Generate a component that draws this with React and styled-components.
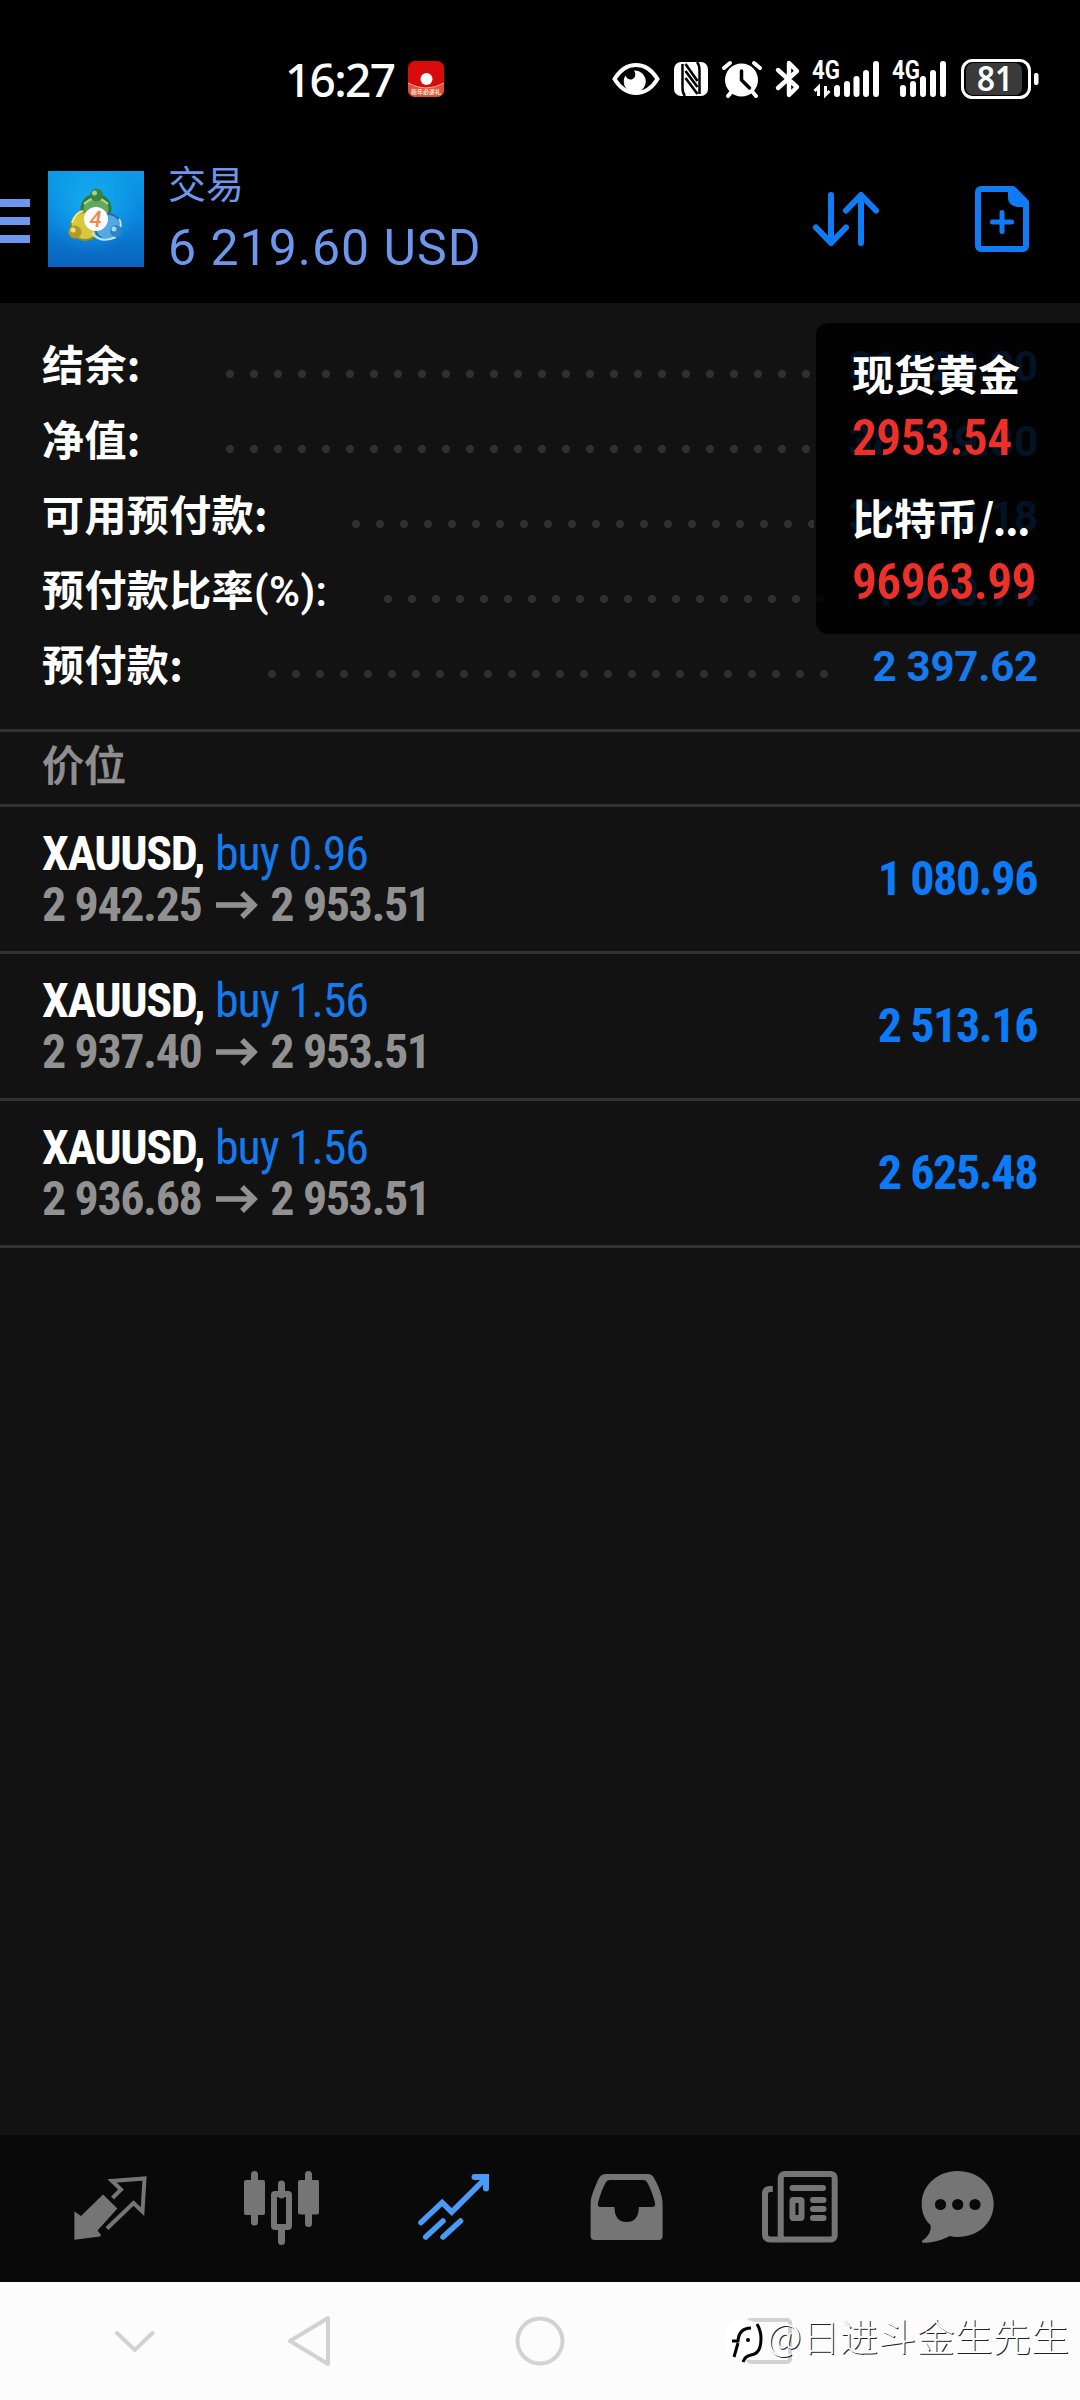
import React from 'react';
import styled, { createGlobalStyle } from 'styled-components';

const GlobalStyle = createGlobalStyle`
    * {
        box-sizing: border-box;
    }
    body {
        margin: 0;
        background: #121212;
        font-family: Roboto, "Noto Sans CJK SC", sans-serif;
    }
    svg {
        display: block;
        overflow: visible;
    }
`;

const Screen = styled.div`
    width: 1080px;
    height: 2400px;
    display: flex;
    flex-direction: column;
    background: #121212;
    overflow: hidden;
    white-space: nowrap;
`;

/* status bar */
const StatusBar = styled.div`
    height: 150px;
    padding: 8px 41px 0 285px;
    display: flex;
    align-items: center;
    background: #000;
    color: #fff;
`;

const Clock = styled.div`
    width: 123px;
    font-family: "Noto Sans", sans-serif;
    font-weight: 500;
    font-size: 46px;
    letter-spacing: -1.7px;
    line-height: 60px;
`;

const StatusIcons = styled.div`
    margin-left: auto;
    display: flex;
    align-items: center;
`;

/* header */
const Header = styled.div`
    height: 153px;
    padding: 21px 51px 0 0;
    display: flex;
    align-items: flex-start;
    background: #000;
    color: #6c97ec;
`;

const MenuButton = styled.div`
    width: 30px;
    height: 44px;
    margin: 28px 18px 0 0;
    display: flex;
    flex-direction: column;
    justify-content: space-between;
`;

const MenuLine = styled.div`
    height: 8px;
    background: #6c97ec;
`;

const HeaderText = styled.div`
    margin-left: 24px;
    flex: 1;
`;

const Title = styled.div`
    font-size: 38px;
    line-height: 40px;
    margin-top: -6px;
`;

const Total = styled.div`
    font-size: 50px;
    line-height: 60px;
    margin-top: 13px;
    letter-spacing: 1px;
`;

const HeaderIcons = styled.div`
    display: flex;
    align-items: center;
    gap: 96px;
    padding-top: 15px;
`;

/* account summary */
const Summary = styled.div`
    position: relative;
    height: 426px;
    padding: 26px 42px 0;
`;

const SummaryRow = styled.div`
    height: 75px;
    display: flex;
    align-items: center;
`;

const SummaryLabel = styled.div`
    height: 60px;
    margin-top: -7px;
    font-weight: 700;
    font-size: 42px;
    line-height: 60px;
    font-family: "Noto Sans CJK SC", sans-serif;
    letter-spacing: 0.4px;
    color: #fff;
`;

const Latin = styled.span`
    font-family: Roboto, sans-serif;
    font-weight: 600;
    line-height: 1;
`;

const Dots = styled.div`
    flex: 1;
    height: 24px;
    margin: 14px 35px 0 ${props => props.$gap}px;
    background: radial-gradient(circle at 4px 12px, #303030 3.6px, transparent 4.4px) 0 0 / 24px 24px repeat-x;
`;

const SummaryValue = styled.div`
    font-weight: 700;
    font-size: 42px;
    line-height: 60px;
    letter-spacing: -0.2px;
    color: #157aee;
`;

const QuotePanel = styled.div`
    position: absolute;
    top: 20px;
    right: 0;
    width: 264px;
    height: 311px;
    padding: 19px 0 0 36px;
    border-radius: 12px 0 0 12px;
    background: rgba(0, 0, 0, 0.85);
`;

const QuoteName = styled.div`
    font-family: "Noto Sans CJK SC", sans-serif;
    font-weight: 700;
    font-size: 42px;
    line-height: 62px;
    color: #fff;
`;

const Ellipsis = styled.span`
    letter-spacing: -1.5px;
`;

const QuotePrice = styled.div`
    height: 82px;
    padding-top: 3px;
    font-weight: 600;
    font-size: 50px;
    font-stretch: 75%;
    letter-spacing: -0.8px;
    line-height: 62px;
    color: #ee3029;
`;

/* positions */
const SectionTitle = styled.div`
    height: 78px;
    padding-left: 42px;
    border-top: 3px solid #333;
    border-bottom: 3px solid #333;
    font-family: "Noto Sans CJK SC", sans-serif;
    font-weight: 500;
    font-size: 42px;
    line-height: 61px;
    color: #8f8f8f;
    -webkit-text-stroke: 0.7px #8f8f8f;
`;

const Position = styled.div`
    height: 147px;
    padding: 0 42px;
    display: flex;
    justify-content: space-between;
    border-bottom: 3px solid #333;
    font-size: 48px;
    font-stretch: 75%;
    font-weight: 700;
    letter-spacing: -1.4px;
`;

const PositionInfo = styled.div`
    padding-top: 21px;
`;

const PositionLine = styled.div`
    display: flex;
    align-items: center;
    line-height: 51px;
    color: ${props => props.$muted ? '#919191' : '#fff'};
`;

const Side = styled.span`
    margin-left: 11px;
    font-weight: 400;
    letter-spacing: -1.1px;
    color: #157aee;
`;

const Profit = styled.div`
    line-height: 60px;
    padding-top: 42px;
    margin-right: 1px;
    color: #0c7bf5;
`;

const ArrowIcon = styled.svg`
    margin: 0 12px 0 15px;
`;

/* bottom bars */
const TabBar = styled.div`
    height: 147px;
    margin-top: auto;
    padding: 25px 0 0 60px;
    display: grid;
    grid-template-columns: 172px 172px 173px 173px 158px 100px;
    background: #090909;
    color: #757575;
`;

const Tab = styled.div`
    color: ${props => props.$active ? '#4a9bf7' : 'inherit'};
`;

const SystemBar = styled.div`
    position: relative;
    height: 118px;
    padding-left: 114px;
    display: grid;
    grid-template-columns: 172px 229px 230px 1fr;
    align-items: center;
    background: #fcfcfc;
    color: #d2d2d2;
`;

const Watermark = styled.div`
    position: absolute;
    left: 723px;
    top: 26px;
    display: flex;
    align-items: flex-start;
    font-family: "Noto Sans CJK SC", sans-serif;
    font-weight: 300;
    font-size: 38px;
    line-height: 53px;
    letter-spacing: 0.2px;
    color: #fff;
    text-shadow: 1px 1px 0 #222;
`;

const StatusIcon = styled.svg`
    margin-right: ${props => props.$gap || 0}px;
`;

const EyeIcon = () => (
    <StatusIcon $gap={14} width="48" height="36" viewBox="0 0 48 36">
        <path d="M2.500 18C8 9 15 4 24 4s16 5 21.500 14C40 27 33 32 24 32S8 27 2.500 18z" fill="none" stroke="#fff" strokeWidth="4" />
        <path d="M22 9.500a11 11 0 1 1-8.500 5c1 3 3.500 4.500 6 4 3.500-.7 5-5 2.500-9z" fill="#fff" />
    </StatusIcon>
);

const NfcIcon = () => (
    <StatusIcon $gap={14} width="34" height="34" viewBox="0 0 34 34">
        <rect width="34" height="34" rx="7" fill="#fff" />
        <path d="M8.500 2v24q0 5 2.500 8M25.500 32V8q0-5-2.500-8" fill="none" stroke="#000" strokeWidth="2.500" />
        <path d="M11.500 2l12 17M11.500 9l12 16M11.500 16l12 16" stroke="#000" strokeWidth="2.600" />
    </StatusIcon>
);

const AlarmIcon = () => (
    <StatusIcon $gap={14} width="40" height="36" viewBox="0 0 40 36">
        <circle cx="19.500" cy="19" r="16.500" fill="#fff" />
        <path d="M2 7l6-5M38 7l-6-5M6 35l5-6M34 35l-5-6" stroke="#fff" strokeWidth="4" strokeLinecap="round" />
        <path d="M19.500 10v9l8 8" stroke="#000" strokeWidth="3.500" strokeLinecap="round" strokeLinejoin="round" fill="none" />
    </StatusIcon>
);

const BluetoothIcon = () => (
    <StatusIcon $gap={13} width="24" height="36" viewBox="0 0 24 36">
        <path d="M2 9l19 17-8 8V2l8 8L2 27" fill="none" stroke="#fff" strokeWidth="4.400" strokeLinejoin="round" strokeLinecap="round" />
    </StatusIcon>
);

const Signal = ({ data, gap }) => (
    <StatusIcon $gap={gap} width="68" height="38" viewBox="0 0 68 38">
        <text x="-1" y="18.500" fontFamily="Roboto" fontWeight="700" fontSize="25" fill="#fff" textLength="28" lengthAdjust="spacingAndGlyphs">4G</text>
        {data && <path d="M5.500 36V27l-4 4M12.500 26v9l4-4" stroke="#fff" strokeWidth="3" fill="none" />}
        {(data ? [[24, 28], [34, 24], [43.5, 19], [53, 13], [63, 4]] : [[10, 28], [20, 24], [30, 19], [40, 13], [50, 4]]).map(([x, y]) => (
            <path key={x} d={`M${x} ${y}V34`} stroke="#fff" strokeWidth="6" strokeLinecap="round" />
        ))}
    </StatusIcon>
);

const BatteryIcon = () => (
    <StatusIcon width="78" height="40" viewBox="0 0 78 40">
        <rect x="5" y="4" width="56" height="32" rx="7" fill="#3a3a3a" />
        <rect x="1.500" y="1.500" width="67" height="37" rx="10" fill="none" stroke="#fff" strokeWidth="3" />
        <rect x="73" y="14" width="4.500" height="12" rx="2" fill="#fff" />
        <text x="16" y="32" fontFamily="Noto Sans" fontWeight="600" fontSize="34" fill="#fff" textLength="36" lengthAdjust="spacingAndGlyphs">81</text>
    </StatusIcon>
);

const RedApp = () => (
    <svg width="36" height="36" viewBox="0 0 36 36">
        <rect width="36" height="36" rx="7" fill="#d90a0c" />
        <path d="M0 22q18 10 36 0v7a7 7 0 0 1-7 7H7a7 7 0 0 1-7-7z" fill="#e0503c" />
        <path d="M0 22q18 10 36 0" fill="none" stroke="#ffb08a" strokeWidth="1" />
        <circle cx="18.500" cy="18" r="6" fill="#fff" />
        <text x="3" y="33" fontFamily="Noto Sans CJK SC" fontWeight="700" fontSize="6" fill="#ffe6cf">新年必遂礼</text>
    </svg>
);

const AppLogo = () => (
    <svg width="96" height="96" viewBox="0 0 96 96">
        <defs>
            <linearGradient id="sky" x1="0" y1="0" x2="0" y2="1">
                <stop offset="0" stopColor="#0b9be6" />
                <stop offset="0.5" stopColor="#0a84dc" />
                <stop offset="1" stopColor="#0a62bd" />
            </linearGradient>
            <radialGradient id="glow" cx="0.45" cy="0.35" r="0.5">
                <stop offset="0" stopColor="#19b6f6" stopOpacity="0.8" />
                <stop offset="1" stopColor="#19b6f6" stopOpacity="0" />
            </radialGradient>
        </defs>
        <rect width="96" height="96" fill="url(#sky)" />
        <rect width="96" height="96" fill="url(#glow)" />
        <circle cx="48" cy="38" r="14" fill="#63a85c" stroke="#2f7a3a" strokeWidth="3" />
        <circle cx="37" cy="55" r="14" fill="#d6c93f" stroke="#938a22" strokeWidth="2" />
        <circle cx="60" cy="56" r="13" fill="#55a9e2" stroke="#1f6fb0" strokeWidth="2" />
        <path d="M36 33q12-11 24 0" stroke="#a9dc9c" strokeWidth="2" fill="none" />
        <path d="M24 52q3-10 11-12" stroke="#f3ec8f" strokeWidth="2" fill="none" />
        <path d="M44 62q9 11 24 4M71 48q3 5 1 9" stroke="#bfe5fb" strokeWidth="2" fill="none" />
        <circle cx="48.500" cy="24" r="6.500" fill="#3d8340" />
        <circle cx="27" cy="61" r="6.500" fill="#b39a1e" />
        <circle cx="68" cy="60" r="6" fill="#2f84c8" />
        <circle cx="46.500" cy="22" r="2.500" fill="#9fd094" />
        <circle cx="25" cy="59" r="2.500" fill="#efe08a" />
        <circle cx="66" cy="58" r="2.500" fill="#a5d8f8" />
        <circle cx="48" cy="48" r="12" fill="#fff" />
        <text x="47.500" y="55.500" textAnchor="middle" fontFamily="Roboto" fontStyle="italic" fontWeight="500" fontSize="22" fill="#f08a4b">4</text>
    </svg>
);

const SortIcon = () => (
    <svg width="66" height="56" viewBox="0 0 66 56" fill="none" stroke="#0f7bf5" strokeWidth="6" strokeLinecap="round" strokeLinejoin="round">
        <path d="M18 4V52M3 36.500l15 15.500 15-15.500" />
        <path d="M48 52V4M33 19.500L48 4l15 15.500" />
    </svg>
);

const NewOrderIcon = () => (
    <svg width="54" height="66" viewBox="0 0 54 66" fill="none" stroke="#0f7bf5" strokeWidth="6">
        <path d="M6 3H38L51 16V60a3 3 0 0 1-3 3H6a3 3 0 0 1-3-3V6a3 3 0 0 1 3-3z" strokeLinejoin="round" />
        <path d="M33 3H39L51 15V21H42Q33 19 33 12z" fill="#0f7bf5" stroke="none" />
        <path d="M27 26.500v19M17.500 36h19" strokeWidth="5" strokeLinecap="round" />
    </svg>
);

const QuotesIcon = () => (
    <svg width="100" height="100" viewBox="0 0 100 100">
        <path d="M14.400 51.500l6.600 4.500 22-21.500L57.400 48.500 37.500 70.500l3.500 4.500-1 1.500-25.600 3.200z" fill="currentColor" />
        <path d="M52.500 38l8.500-8.500-9-8.500 32.500-2.500-2 33-9-8.500L47 68.500" fill="none" stroke="currentColor" strokeWidth="4" />
    </svg>
);

const ChartsIcon = () => (
    <svg width="100" height="100" viewBox="0 0 100 100" fill="none" stroke="currentColor">
        <path d="M22.500 14.500V62M49.500 24V35M49.500 70v11.500M76.500 14.500V63.500" strokeWidth="7" strokeLinecap="round" />
        <rect x="12" y="20" width="21" height="35" rx="2" fill="currentColor" stroke="none" />
        <rect x="66" y="20" width="21" height="34.500" rx="2" fill="currentColor" stroke="none" />
        <rect x="42" y="34" width="15" height="33" rx="1" strokeWidth="6" />
    </svg>
);

const TradeIcon = () => (
    <svg width="100" height="100" viewBox="0 0 100 100" fill="none" stroke="currentColor" strokeWidth="5.500" strokeLinecap="round">
        <path d="M17 62.500L38.200 42.500l9.500 9.500L82 18" />
        <path d="M70.500 17H82v11.500" strokeWidth="6" />
        <path d="M39 61L21.700 77M56.500 61L39 77" />
    </svg>
);

const HistoryIcon = () => (
    <svg width="100" height="100" viewBox="0 0 100 100">
        <path fillRule="evenodd" fill="currentColor" d="M29 14H71Q75 14 77 18C82 27 85.600 36 85.600 44V76q0 4-4 4H17.600q-4 0-4-4V44C13.600 36 18 27 22 18Q24.500 14 29 14zM33 20q-3 0-4.500 3Q24 31 21 43q-1 4 3 4H37.500C37.500 56 41 62 49.600 62S61.800 56 61.800 47H75q4 0 3-4Q75 31 70.500 23 69.500 20 66 20z" />
    </svg>
);

const NewsIcon = () => (
    <svg width="100" height="100" viewBox="0 0 100 100" fill="none" stroke="currentColor" strokeWidth="6">
        <rect x="30.700" y="14" width="54" height="65.500" rx="4" />
        <path d="M22.800 29H20q-5 0-5 5V74q0 5.500 5.500 5.500H34" />
        <path d="M42.500 28H73M63 40H73.500M63 49H73.500M63 58H73.500" strokeLinecap="round" />
        <rect x="42.500" y="40" width="9" height="18" rx="1" />
    </svg>
);

const ChatIcon = () => (
    <svg width="100" height="100" viewBox="0 0 100 100">
        <path fill="currentColor" d="M49.700 11C70 11 85.700 25 85.700 44S70 77 49.700 77Q45 77 41.500 76C32 81 24 83 15 82.700 13 82.500 14 81 15 80 21 76 23.500 70 22.500 65 17 60 13.700 53 13.700 44 13.700 25 30 11 49.700 11z" />
        {[32.5, 49.7, 67].map(x => <circle key={x} cx={x} cy="44.500" r="5.600" fill="#090909" />)}
    </svg>
);

const tabs = [QuotesIcon, ChartsIcon, TradeIcon, HistoryIcon, NewsIcon, ChatIcon];

const summary = [
    { label: '结余:', value: '31 920.20', gap: 85 },
    { label: '净值:', value: '38 139.80', gap: 85 },
    { label: '可用预付款:', value: '35 742.18', gap: 84 },
    { label: '预付款比率', latin: '(%):', value: '1 590.74', gap: 57 },
    { label: '预付款:', value: '2 397.62', gap: 85 },
];

const positions = [
    { volume: '0.96', open: '2 942.25', price: '2 953.51', profit: '1 080.96' },
    { volume: '1.56', open: '2 937.40', price: '2 953.51', profit: '2 513.16' },
    { volume: '1.56', open: '2 936.68', price: '2 953.51', profit: '2 625.48' },
];

const App = () => {
    return (
        <Screen>
            <GlobalStyle />
            <StatusBar>
                <Clock>16:27</Clock>
                <RedApp />
                <StatusIcons>
                    <EyeIcon />
                    <NfcIcon />
                    <AlarmIcon />
                    <BluetoothIcon />
                    <Signal data gap={12} />
                    <Signal gap={0} />
                    <BatteryIcon />
                </StatusIcons>
            </StatusBar>
            <Header>
                <MenuButton>
                    <MenuLine />
                    <MenuLine />
                    <MenuLine />
                </MenuButton>
                <AppLogo />
                <HeaderText>
                    <Title>交易</Title>
                    <Total>6 219.60 USD</Total>
                </HeaderText>
                <HeaderIcons>
                    <SortIcon />
                    <NewOrderIcon />
                </HeaderIcons>
            </Header>
            <Summary>
                {
                    summary.map(item => (
                        <SummaryRow key={item.label}>
                            <SummaryLabel>{item.label}{item.latin && <Latin>{item.latin}</Latin>}</SummaryLabel>
                            <Dots $gap={item.gap} />
                            <SummaryValue>{item.value}</SummaryValue>
                        </SummaryRow>
                    ))
                }
                <QuotePanel>
                    <QuoteName>现货黄金</QuoteName>
                    <QuotePrice>2953.54</QuotePrice>
                    <QuoteName>比特币<Ellipsis>/...</Ellipsis></QuoteName>
                    <QuotePrice>96963.99</QuotePrice>
                </QuotePanel>
            </Summary>
            <SectionTitle>价位</SectionTitle>
            {
                positions.map(item => (
                    <Position key={item.open}>
                        <PositionInfo>
                            <PositionLine>XAUUSD,<Side>buy {item.volume}</Side></PositionLine>
                            <PositionLine $muted>
                                {item.open}
                                <ArrowIcon width="42" height="28" viewBox="0 0 42 28" fill="none" stroke="#919191" strokeWidth="5.500">
                                    <path d="M0 14H38M26 2l12 12L26 26" />
                                </ArrowIcon>
                                {item.price}
                            </PositionLine>
                        </PositionInfo>
                        <Profit>{item.profit}</Profit>
                    </Position>
                ))
            }
            <TabBar>
                {
                    tabs.map((Icon, index) => (
                        <Tab key={index} $active={index === 2}>
                            <Icon />
                        </Tab>
                    ))
                }
            </TabBar>
            <SystemBar>
                <svg width="42" height="24" viewBox="0 0 42 24" fill="none" stroke="currentColor" strokeWidth="4" strokeLinecap="round">
                    <path d="M3 4l17.800 17L38.500 4" />
                </svg>
                <svg width="46" height="54" viewBox="0 0 46 54" fill="none" stroke="currentColor" strokeWidth="4" strokeLinejoin="round">
                    <path d="M4 27L42 4V50z" />
                </svg>
                <svg width="50" height="50" viewBox="0 0 50 50" fill="none" stroke="currentColor" strokeWidth="4">
                    <circle cx="25" cy="25" r="22.500" />
                </svg>
                <svg width="48" height="48" viewBox="0 0 48 48" fill="none" stroke="currentColor" strokeWidth="4">
                    <rect x="3" y="3" width="42" height="42" rx="3" />
                </svg>
                <Watermark>
                    <svg width="44" height="60" viewBox="0 0 44 60" fill="none" stroke="#000">
                        <rect x="2" y="12" width="36" height="40" rx="15" fill="#fff" stroke="none" />
                        <path d="M11 49L15 35M9 33H15Q16 20 28 20" strokeWidth="3" />
                        <path d="M34 16Q40 26 37 39 35 46 28 47 22 48 20 54" strokeWidth="3" />
                        <circle cx="25" cy="32" r="2" fill="#000" stroke="none" />
                    </svg>
                    @日进斗金生先生
                </Watermark>
            </SystemBar>
        </Screen>
    );
};

export default App;
